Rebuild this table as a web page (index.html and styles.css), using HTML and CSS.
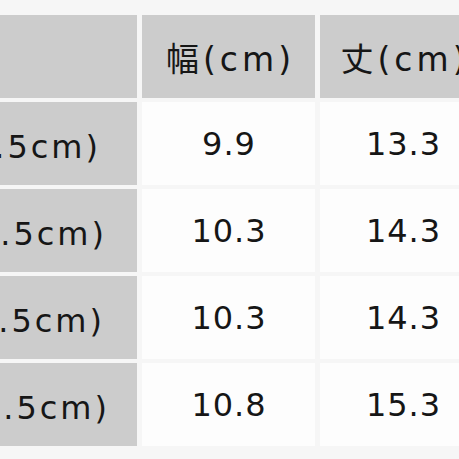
FILE: index.html
```html
<!DOCTYPE html>
<html lang="ja">
<head>
<meta charset="utf-8">
<link rel="stylesheet" href="styles.css">
</head>
<body>
<div class="table">
  <div class="cell head label"></div>
  <div class="cell head">幅(cm)</div>
  <div class="cell head">丈(cm)</div>

  <div class="cell label r1">S(22〜22.5cm)</div>
  <div class="cell val">9.9</div>
  <div class="cell val">13.3</div>

  <div class="cell label r2">M(23〜23.5cm)</div>
  <div class="cell val">10.3</div>
  <div class="cell val">14.3</div>

  <div class="cell label r3">L(24〜24.5cm)</div>
  <div class="cell val">10.3</div>
  <div class="cell val">14.3</div>

  <div class="cell label r4">LL(25〜25.5cm)</div>
  <div class="cell val">10.8</div>
  <div class="cell val">15.3</div>
</div>
</body>
</html>
```
FILE: styles.css
```css
html, body {
  margin: 0;
  padding: 0;
  background: #f6f6f6;
  overflow: hidden;
}
.table {
  display: grid;
  grid-template-columns: 260px 173px 166px;
  grid-auto-rows: 83px;
  column-gap: 5px;
  row-gap: 4px;
  margin-top: 15px;
  margin-left: -123px;
  width: 614px;
  font-family: "DejaVu Sans", "Noto Sans CJK JP", sans-serif;
  font-size: 32px;
  color: #161616;
}
.cell {
  display: flex;
  align-items: center;
  justify-content: center;
  background: #fdfdfd;
  white-space: nowrap;
  overflow: hidden;
}
.head, .label {
  background: #cccccc;
}
.head {
  letter-spacing: 4px;
  padding-left: 4px;
  font-size: 33px;
}
.label {
  justify-content: flex-end;
  letter-spacing: 3px;
}
.val {
  letter-spacing: 1px;
  padding-left: 1px;
}
.r1 { padding-right: 36px; }
.r2 { padding-right: 30px; }
.r3 { padding-right: 32px; }
.r4 { padding-right: 27px; }
```
